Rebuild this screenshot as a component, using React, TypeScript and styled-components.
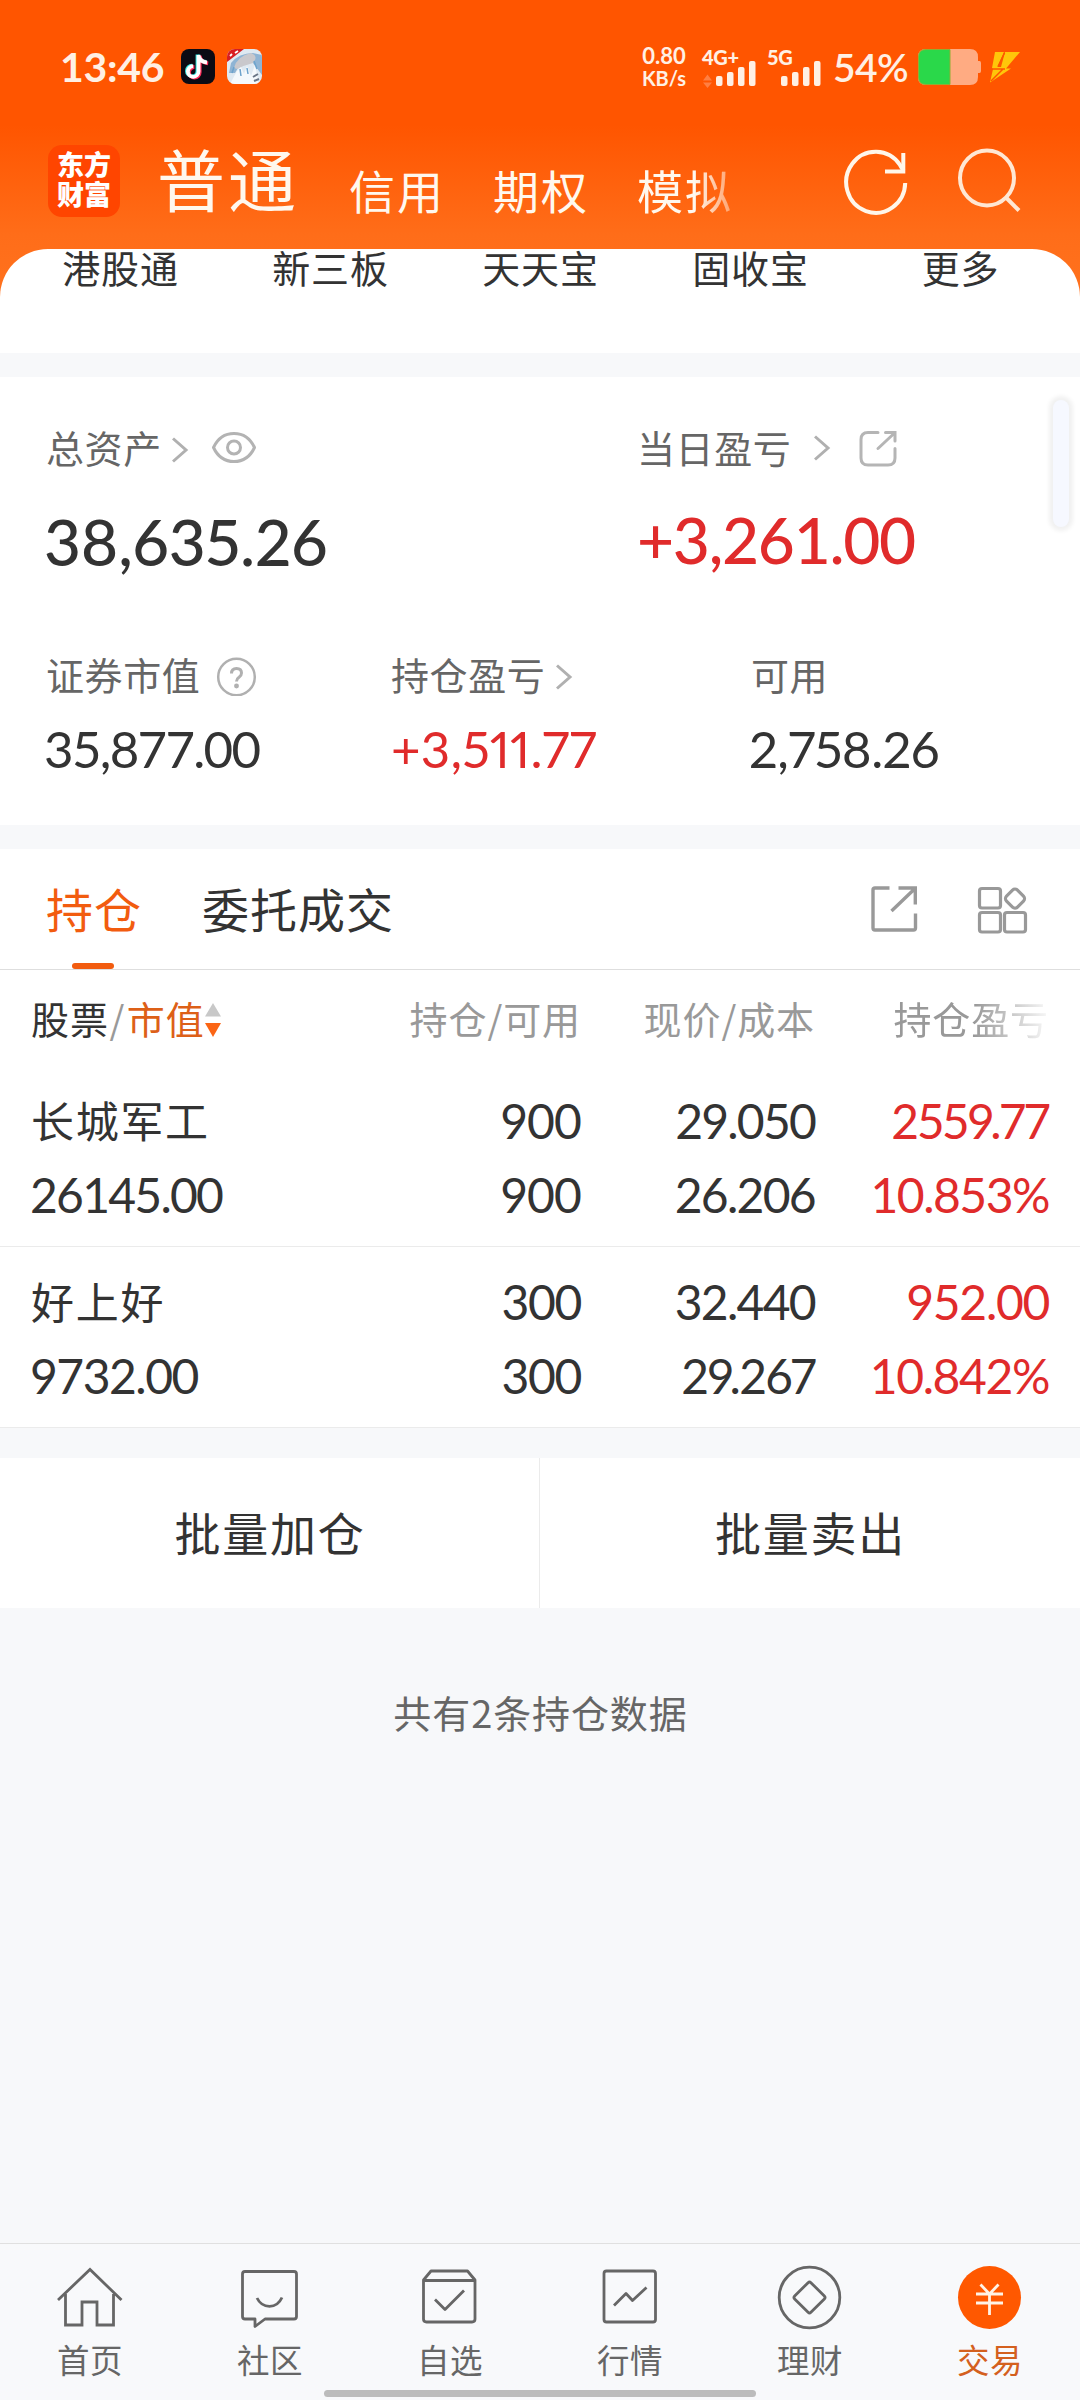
import React from "react";
import styled, { createGlobalStyle, css } from "styled-components";

const cjk = `"Noto Sans CJK SC", "Noto Sans", sans-serif`;
const latin = `Lato, "Noto Sans CJK SC", sans-serif`;

const ink = "#333333";
const grey = "#666666";
const pale = "#999999";
const orange = "#f25c0f";
const red = "#e02b2b";
const cream = "#fff0e4";

const GlobalStyle = createGlobalStyle`
  * { box-sizing: border-box; }
  html, body { margin: 0; padding: 0; background: #f7f8fa; }
  svg { display: block; flex: none; }
`;

const Screen = styled.div`
  display: flex;
  flex-direction: column;
  width: 1080px;
  height: 2400px;
  overflow: hidden;
  position: relative;
  background: #f7f8fa;
  color: ${ink};
  font-family: ${cjk};
  white-space: nowrap;
`;

/* ---------- top ---------- */

const Top = styled.header`
  background: linear-gradient(#ff5500 0, #ff5500 125px, #ff6d19 235px, #ff721e 300px);
`;

const StatusBar = styled.div`
  display: flex;
  justify-content: space-between;
  height: 133px;
  padding: 44px 60px 0 60px;
  color: ${cream};
  font-family: ${latin};
`;

const StatusGroup = styled.div`
  display: flex;
  align-items: flex-start;
  height: 48px;
`;

const Clock = styled.span`
  width: 121px;
  font-size: 41px;
  font-weight: 700;
  line-height: 45px;
  letter-spacing: -0.3px;
`;

const AppIcon = styled.svg`
  margin: 5px 12px 0 0;
`;

const Speed = styled.div`
  display: flex;
  flex-direction: column;
  align-items: center;
  width: 50px;
  margin-right: 13px;
  font-weight: 700;
  font-size: 22px;
  line-height: 24px;
`;

const SpeedUnit = styled.span`
  font-size: 20px;
  line-height: 20px;
`;

const Signal = styled.div<{ $w: number }>`
  display: flex;
  flex-direction: column;
  width: ${(p) => p.$w}px;
  font-size: 20px;
  font-weight: 900;
  line-height: 27px;
  letter-spacing: -0.3px;
`;

const SignalBars = styled.svg`
  margin-top: -10px;
`;

const Percent = styled.span`
  width: 83px;
  font-size: 39px;
  font-weight: 600;
  line-height: 46px;
  letter-spacing: -0.6px;
`;

const PowerIcons = styled.div`
  display: flex;
  margin-top: 3px;
`;

const NavBar = styled.div`
  display: flex;
  height: 116px;
  padding: 12px 59px 0 48px;
  color: #fff8ee;
`;

const Logo = styled.div`
  width: 72px;
  height: 72px;
  padding: 4px 8px 0 9px;
  border-radius: 14px;
  background: #ff4500;
  color: #fff;
  font-size: 27px;
  font-weight: 900;
  line-height: 30px;
  white-space: normal;
  word-break: break-all;
`;

const Modes = styled.nav`
  display: flex;
  align-items: baseline;
  width: 644px;
  margin: -15px 0 0 37px;
`;

const Mode = styled.span<{ $active?: boolean; $fade?: boolean }>`
  font-size: ${(p) => (p.$active ? 68 : 46)}px;
  line-height: 100px;
  letter-spacing: ${(p) => (p.$active ? 3 : 2)}px;
  margin-right: ${(p) => (p.$active ? 50 : 48)}px;
  ${(p) =>
    p.$active &&
    css`
      transform: translateY(-2px);
    `}
  ${(p) =>
    p.$fade &&
    css`
      mask-image: linear-gradient(90deg, #000 60%, rgba(0, 0, 0, 0.45) 96%);
    `}
`;

const NavIcons = styled.div`
  display: flex;
  gap: 46px;
  margin: 2px 0 0 auto;
`;

const Sheet = styled.div`
  display: grid;
  grid-template-columns: repeat(5, 210px);
  justify-content: center;
  height: 104px;
  padding-left: 1px;
  border-radius: 48px 48px 0 0;
  background: #fff;
  text-align: center;
  font-size: 38px;
  line-height: 36px;
  letter-spacing: 0.8px;
`;

/* ---------- summary ---------- */

const Summary = styled.section`
  height: 448px;
  margin-top: 24px;
  padding: 48px 0 0 46px;
  background: #fff;
`;

const Pair = styled.div`
  display: grid;
  grid-template-columns: 591px 1fr;
  height: 151px;
`;

const Triple = styled.div`
  display: grid;
  grid-template-columns: 345px 360px 1fr;
  margin-top: 76px;
`;

const Label = styled.div`
  display: flex;
  height: 44px;
  color: ${grey};
  font-size: 38px;
  line-height: 44px;
  letter-spacing: 0.6px;
`;

const Amount = styled.div<{ $big?: boolean; $up?: boolean; $prop?: boolean; $ls: number; $gap: number }>`
  margin: ${(p) => p.$gap}px 0 0 ${(p) => (p.$up ? 0 : -2)}px;
  font-family: ${latin};
  font-size: ${(p) => (p.$big ? 64 : 51)}px;
  font-weight: ${(p) => (p.$big ? 500 : 400)};
  font-variant-numeric: ${(p) => (p.$prop ? "proportional-nums" : "normal")};
  line-height: ${(p) => (p.$big ? 70 : 56)}px;
  letter-spacing: ${(p) => p.$ls}px;
  color: ${(p) => (p.$up ? red : ink)};
`;

const Thumb = styled.div`
  position: absolute;
  left: 1053px;
  top: 400px;
  width: 16px;
  height: 127px;
  border-radius: 8px;
  background: #f6f8ff;
  box-shadow: 0 0 4px 4px rgba(0, 0, 0, 0.06);
`;

/* ---------- holdings ---------- */

const Holdings = styled.section`
  margin-top: 24px;
  background: #fff;
`;

const Tabs = styled.div`
  display: flex;
  height: 121px;
  padding: 0 52px 0 46px;
  border-bottom: 1px solid #dedede;
`;

const Tab = styled.div<{ $active?: boolean }>`
  display: flex;
  flex-direction: column;
  align-items: center;
  margin-right: 60px;
  font-size: 47px;
  line-height: 118px;
  letter-spacing: 1px;
  color: ${(p) => (p.$active ? orange : ink)};
  &::after {
    content: "";
    width: 42px;
    height: 6px;
    margin: -4px 2px 0 0;
    border-radius: 3px;
    background: ${(p) => (p.$active ? orange : "transparent")};
  }
`;

const TabTools = styled.div`
  display: flex;
  gap: 57px;
  margin: 33px 0 0 auto;
`;

const gridRow = css`
  display: grid;
  grid-template-columns: 250px 300px 234px 234px;
  padding: 0 30px 0 31px;
`;

const HeadRow = styled.div`
  ${gridRow}
  height: 96px;
  align-items: center;
  color: ${pale};
  font-size: 38px;
  line-height: 44px;
  letter-spacing: 0.9px;
  text-align: right;
`;

const SortCell = styled.div`
  display: flex;
  align-items: center;
`;

const Dark = styled.span`
  color: ${ink};
`;

const Hot = styled.span`
  color: #dd6018;
`;

const Slash = styled.span`
  width: 19px;
  margin-left: -1px;
  text-align: center;
`;

const FadeCell = styled.div`
  mask-image: linear-gradient(90deg, #000 68%, rgba(0, 0, 0, 0.12) 98%);
`;

const Row = styled.div`
  ${gridRow}
  grid-template-rows: 73.5px 73.5px;
  height: 181px;
  padding-top: 18px;
  border-bottom: 1px solid #ebebeb;
  font-family: ${latin};
  font-size: 48px;
  line-height: 73.5px;
  text-align: right;
`;

const Name = styled.div`
  font-family: ${cjk};
  font-size: 43px;
  line-height: 70px;
  letter-spacing: 1.7px;
  text-align: left;
`;

const Cell = styled.div<{ $left?: boolean; $up?: boolean; $prop?: boolean; $ls: number }>`
  margin-left: ${(p) => (p.$left ? -1 : 0)}px;
  text-align: ${(p) => (p.$left ? "left" : "right")};
  color: ${(p) => (p.$up ? red : ink)};
  font-variant-numeric: ${(p) => (p.$prop ? "proportional-nums" : "normal")};
  letter-spacing: ${(p) => p.$ls}px;
`;

const Actions = styled.div`
  display: grid;
  grid-template-columns: 1fr 1fr;
  height: 150px;
  margin-top: 30px;
  background: #fff;
`;

const Action = styled.button`
  padding: 0 0 4px 1px;
  border: 0;
  border-right: 1px solid #ebebeb;
  background: none;
  color: ${ink};
  font-family: ${cjk};
  font-size: 46px;
  letter-spacing: 1.7px;
  &:last-child {
    border-right: 0;
  }
`;

const Note = styled.p`
  margin: 82px 0 0;
  padding-left: 1px;
  color: ${grey};
  font-size: 38px;
  line-height: 44px;
  letter-spacing: 0.9px;
  text-align: center;
`;

/* ---------- bottom ---------- */

const BottomBar = styled.nav`
  display: grid;
  grid-template-columns: repeat(6, 1fr);
  height: 157px;
  margin-top: auto;
  border-top: 1px solid #e0e0e0;
  background: #f8f9fb;
`;

const BottomItem = styled.div<{ $active?: boolean }>`
  display: flex;
  flex-direction: column;
  align-items: center;
  gap: 7px;
  padding-top: 18px;
  color: ${(p) => (p.$active ? "#d4601e" : grey)};
  font-size: 32.5px;
  line-height: 36px;
  letter-spacing: 0.6px;
`;

const HomeHandle = styled.div`
  position: absolute;
  left: 324px;
  top: 2390px;
  width: 432px;
  height: 7px;
  border-radius: 4px;
  background: #bcbcbc;
`;

/* ---------- icons ---------- */

const Chevron = ({ y = 0, left = 10 }: { y?: number; left?: number }) => (
  <svg width={20 + left} height="44" viewBox={`${-left} 0 ${20 + left} 44`} fill="none" stroke="#b0b0b0" strokeWidth="3">
    <path d={`M3 ${13.5 + y}L16 ${25 + y}L3 ${36.5 + y}`} />
  </svg>
);

const bars = [
  [0, 15, 10],
  [11, 11, 14],
  [22, 6, 19],
  [33, 0, 25],
];

const Bars = ({ x, arrows }: { x: number; arrows?: boolean }) => (
  <SignalBars width="60" height="27" viewBox="0 0 60 27">
    {arrows && <path d="M1 19.500L5.500 13.500L10 19.500zM1 21.500H10L5.500 27z" fill="#ff7f42" />}
    {bars.map(([dx, y, h]) => (
      <rect key={dx} x={x + dx} y={y} width="6.500" height={h} rx="2" fill={cream} />
    ))}
  </SignalBars>
);

const DouyinIcon = () => {
  const note = "M17.500 6V22.500a5.300 5.300 0 1 1-5.300-5.300M17.500 6c.5 4 3.500 7 8.500 7.500";
  return (
    <AppIcon width="34" height="35" viewBox="0 0 34 35" fill="none" strokeWidth="3.800">
      <rect width="34" height="35" rx="8" fill="#0b0b14" />
      <path d={note} stroke="#35e6e2" transform="translate(-1 -.6)" />
      <path d={note} stroke="#ff2d5c" transform="translate(1.200 .8)" />
      <path d={note} stroke="#fff" />
    </AppIcon>
  );
};

const GameIcon = () => (
  <AppIcon width="35" height="35" viewBox="0 0 35 35">
    <defs>
      <clipPath id="gameClip">
        <rect width="35" height="35" rx="8" />
      </clipPath>
    </defs>
    <g clipPath="url(#gameClip)">
      <rect width="35" height="35" fill="#dfe9f1" />
      <path d="M4 14Q12 4 26 4L35 6V26L26 14Q14 12 8 24L2 24z" fill="#8fb4d4" />
      <path d="M7 19Q10 7 24 4Q32 7 26 14Q18 16 10 20z" fill="#c9c8cc" />
      <path d="M10 22L14 18L17 25L20 17L24 27L28 16L32 35H3z" fill="#f5f9fc" />
      <path d="M13 20l1 7M20 19l1 6M27 12l3 8M5 24l2-6" stroke="#6da3cc" strokeWidth="1.500" />
      <path d="M26 28l5-3M27 32l5-2" stroke="#6b7686" strokeWidth="2" />
      <path d="M0 0H17L0 13z" fill="#d81d22" />
      <path d="M3 7l2-2M8 4l3-2" stroke="#fff" strokeWidth="1.800" />
    </g>
  </AppIcon>
);

const Battery = () => (
  <svg width="66" height="40" viewBox="916 47 66 40">
    <path d="M926 49H970Q978 49 978 57V61H979.500Q981 61 981 63V71Q981 73 979.500 73H978V77Q978 85 970 85H926Q918 85 918 77V57Q918 49 926 49z" fill="#ffab82" />
    <path d="M926 49.500H950V84.500H926Q918.500 84.500 918.500 77V57Q918.500 49.500 926 49.500z" fill="#2ad84a" stroke="#8fae33" strokeWidth="1" />
  </svg>
);

const Bolt = () => (
  <svg width="38" height="40" viewBox="982 47 38 40">
    <path d="M995 52H1004L997.500 67H1001L1005 52H1020L1006 68.500H1011L990 82.500L993 69L992 68z" fill="#ffc60a" />
    <path d="M1004.500 53L998 66.500M992 69H1005M1003 69L991 81" stroke="#ff5500" strokeWidth="1.500" fill="none" />
  </svg>
);

const RefreshIcon = () => (
  <svg width="66" height="70" viewBox="843 147 66 70" fill="none" stroke="#fff6ea" strokeWidth="4">
    <path d="M905.200 183A29.500 30.500 0 1 1 900 165L903.500 171" />
    <path d="M903.300 153V171.500H885" />
  </svg>
);

const SearchIcon = () => (
  <svg width="66" height="70" viewBox="955 147 66 70" fill="none" stroke="#ffe7d3" strokeWidth="4">
    <ellipse cx="987" cy="178" rx="27" ry="27.500" />
    <path d="M1005.500 197L1019 210.500" />
  </svg>
);

const EyeIcon = () => (
  <svg width="68" height="44" viewBox="190 425 68 44" fill="none" stroke="#b3b3b3" strokeWidth="3">
    <path d="M213.500 447.500Q220 433.500 234 433.500Q248 433.500 254.500 447.500Q248 461.500 234 461.500Q220 461.500 213.500 447.500z" strokeLinejoin="round" />
    <circle cx="234" cy="447.500" r="6.500" />
  </svg>
);

const SmallShare = () => (
  <svg width="64" height="44" viewBox="832 425 64 44" overflow="visible" fill="none" stroke="#b5b5b5" strokeWidth="3" strokeLinecap="round">
    <path d="M878 432.500H868Q861 432.500 861 439.500V458Q861 465 868 465H888Q895 465 895 458V448.500" />
    <path d="M885.500 432.500H895V441M894 433.500L878 448.500" />
  </svg>
);

const HelpIcon = () => (
  <svg width="58" height="44" viewBox="200 652 58 44" fill="none" stroke="#b0b0b0" strokeWidth="2.500">
    <circle cx="236.500" cy="677" r="18.300" />
    <path d="M231.500 673.500Q231.500 668.500 236.500 668.500Q241.500 668.500 241.500 673Q241.500 675.500 239 677.300Q236.500 679 236.500 681.500" strokeWidth="3" />
    <circle cx="236.500" cy="686" r="1.200" fill="#b0b0b0" />
  </svg>
);

const BigShare = () => (
  <svg width="48" height="52" viewBox="870 882 48 52" fill="none" stroke={pale} strokeWidth="3.400">
    <path d="M889.500 888H875Q873 888 873 890V928Q873 930 875 930H913.500Q915.500 930 915.500 928V913.500" />
    <path d="M898.500 888H915.300V904.500M914.500 889L891.500 911" />
  </svg>
);

const GridIcon = () => (
  <svg width="53" height="52" viewBox="975 882 53 52" fill="none" stroke={pale} strokeWidth="3.200">
    <rect x="979.500" y="888.500" width="21" height="19.500" rx="2.500" />
    <rect x="979.500" y="912.500" width="21" height="19.500" rx="2.500" />
    <rect x="1004.500" y="912.500" width="21" height="19.500" rx="2.500" />
    <rect x="1007.300" y="890.800" width="15.500" height="15.500" rx="3.500" transform="rotate(45 1015 898.500)" />
  </svg>
);

const SortIcon = () => (
  <svg width="18" height="44" viewBox="205 996 18 44">
    <path d="M205 1016.500H221L213 1003z" fill="#c8c8c8" />
    <path d="M205 1023H221L213 1037z" fill="#fb6514" />
  </svg>
);

const NavGlyph = ({ x, children }: { x: number; children: React.ReactNode }) => (
  <svg width="72" height="72" viewBox={`${x} 2262 72 72`} fill="none" stroke={grey} strokeWidth="2.800" strokeLinejoin="round">
    {children}
  </svg>
);

const tabs = [
  {
    label: "首页",
    icon: (
      <NavGlyph x={54}>
        <path d="M58 2300L90 2269.500L121.500 2300M65.500 2294V2325H82V2302H97V2325H113.500V2294" strokeLinejoin="miter" />
      </NavGlyph>
    ),
  },
  {
    label: "社区",
    icon: (
      <NavGlyph x={234}>
        <path d="M245 2271.500H294Q296.500 2271.500 296.500 2274V2316.500Q296.500 2319 294 2319H265L255 2326.500V2319H245Q242.500 2319 242.500 2316.500V2274Q242.500 2271.500 245 2271.500z" />
        <path d="M257 2298Q261 2306.300 269.500 2306.300Q278 2306.300 282 2297.500" />
      </NavGlyph>
    ),
  },
  {
    label: "自选",
    icon: (
      <NavGlyph x={414}>
        <path d="M423.500 2280L431 2271H467.500L475 2280V2319Q475 2322 472 2322H426.500Q423.500 2322 423.500 2319zM423.500 2280.500H475M435 2299.500L445 2309.500L464 2290.500" />
      </NavGlyph>
    ),
  },
  {
    label: "行情",
    icon: (
      <NavGlyph x={594}>
        <rect x="604" y="2271" width="51.500" height="51" rx="2.500" />
        <path d="M614 2305.500L626 2293.500L632.500 2300.500L646.500 2287.500" />
      </NavGlyph>
    ),
  },
  {
    label: "理财",
    icon: (
      <NavGlyph x={774}>
        <circle cx="809.500" cy="2297.500" r="30.300" />
        <rect x="798" y="2286" width="23" height="23" rx="2" transform="rotate(45 809.500 2297.500)" />
      </NavGlyph>
    ),
  },
  {
    label: "交易",
    active: true,
    icon: (
      <NavGlyph x={954}>
        <circle cx="989.500" cy="2297.500" r="31.500" fill="#ff5800" stroke="none" />
        <path d="M980.500 2284.500L989.500 2294L998.500 2284.500M976 2294H1003M976 2303H1003M989.500 2294V2315" stroke="#fff3e6" />
      </NavGlyph>
    ),
  },
];

interface Figure {
  text: string;
  ls: number;
  prop?: boolean;
  up?: boolean;
  left?: boolean;
}

const holdings: { name: string; top: Figure[]; bottom: Figure[] }[] = [
  {
    name: "长城军工",
    top: [
      { text: "900", ls: -0.9 },
      { text: "29.050", ls: -1.8 },
      { text: "2559.77", ls: -1, prop: true, up: true },
    ],
    bottom: [
      { text: "26145.00", ls: -1.75, left: true },
      { text: "900", ls: -0.9 },
      { text: "26.206", ls: -1.7 },
      { text: "10.853%", ls: -1.5, up: true },
    ],
  },
  {
    name: "好上好",
    top: [
      { text: "300", ls: -1.3 },
      { text: "32.440", ls: -1.7 },
      { text: "952.00", ls: -1.3, up: true },
    ],
    bottom: [
      { text: "9732.00", ls: -1.5, left: true },
      { text: "300", ls: -1.3 },
      { text: "29.267", ls: -1.3, prop: true },
      { text: "10.842%", ls: -1.4, up: true },
    ],
  },
];

const renderCell = (f: Figure, i: number) => (
  <Cell key={i} $ls={f.ls} $prop={f.prop} $up={f.up} $left={f.left}>
    {f.text}
  </Cell>
);

export default function App() {
  return (
    <Screen>
      <GlobalStyle />
      <Top>
        <StatusBar>
          <StatusGroup>
            <Clock>13:46</Clock>
            <DouyinIcon />
            <GameIcon />
          </StatusGroup>
          <StatusGroup>
            <Speed>
              <span>0.80</span>
              <SpeedUnit>KB/s</SpeedUnit>
            </Speed>
            <Signal $w={65}>
              4G+
              <Bars x={14} arrows />
            </Signal>
            <Signal $w={66}>
              5G
              <Bars x={14} />
            </Signal>
            <Percent>54%</Percent>
            <PowerIcons>
              <Battery />
              <Bolt />
            </PowerIcons>
          </StatusGroup>
        </StatusBar>
        <NavBar>
          <Logo>东方财富</Logo>
          <Modes>
            <Mode $active>普通</Mode>
            <Mode>信用</Mode>
            <Mode>期权</Mode>
            <Mode $fade>模拟</Mode>
          </Modes>
          <NavIcons>
            <RefreshIcon />
            <SearchIcon />
          </NavIcons>
        </NavBar>
        <Sheet>
          <span>港股通</span>
          <span>新三板</span>
          <span>天天宝</span>
          <span>固收宝</span>
          <span>更多</span>
        </Sheet>
      </Top>

      <Summary>
        <Pair>
          <div>
            <Label>
              总资产
              <Chevron left={8} />
              <EyeIcon />
            </Label>
            <Amount $big $prop $ls={-0.2} $gap={38}>38,635.26</Amount>
          </div>
          <div>
            <Label>
              当日盈亏
              <Chevron left={21} y={-2} />
              <SmallShare />
            </Label>
            <Amount $big $up $ls={-1.3} $gap={36}>+3,261.00</Amount>
          </div>
        </Pair>
        <Triple>
          <div>
            <Label>
              证券市值
              <HelpIcon />
            </Label>
            <Amount $ls={-1.7} $gap={25}>35,877.00</Amount>
          </div>
          <div>
            <Label>
              持仓盈亏
              <Chevron left={9} />
            </Label>
            <Amount $up $prop $ls={0.2} $gap={25}>+3,511.77</Amount>
          </div>
          <div>
            <Label>可用</Label>
            <Amount $prop $ls={-0.6} $gap={25}>2,758.26</Amount>
          </div>
        </Triple>
      </Summary>
      <Thumb />

      <Holdings>
        <Tabs>
          <Tab $active>持仓</Tab>
          <Tab>委托成交</Tab>
          <TabTools>
            <BigShare />
            <GridIcon />
          </TabTools>
        </Tabs>
        <HeadRow>
          <SortCell>
            <Dark>股票</Dark>
            <Slash>/</Slash>
            <Hot>市值</Hot>
            <SortIcon />
          </SortCell>
          <div>持仓/可用</div>
          <div>现价/成本</div>
          <FadeCell>持仓盈亏</FadeCell>
        </HeadRow>
        {holdings.map((h) => (
          <Row key={h.name}>
            <Name>{h.name}</Name>
            {h.top.map(renderCell)}
            {h.bottom.map(renderCell)}
          </Row>
        ))}
      </Holdings>

      <Actions>
        <Action>批量加仓</Action>
        <Action>批量卖出</Action>
      </Actions>
      <Note>共有2条持仓数据</Note>

      <BottomBar>
        {tabs.map((t) => (
          <BottomItem key={t.label} $active={t.active}>
            {t.icon}
            <span>{t.label}</span>
          </BottomItem>
        ))}
      </BottomBar>
      <HomeHandle />
    </Screen>
  );
}
